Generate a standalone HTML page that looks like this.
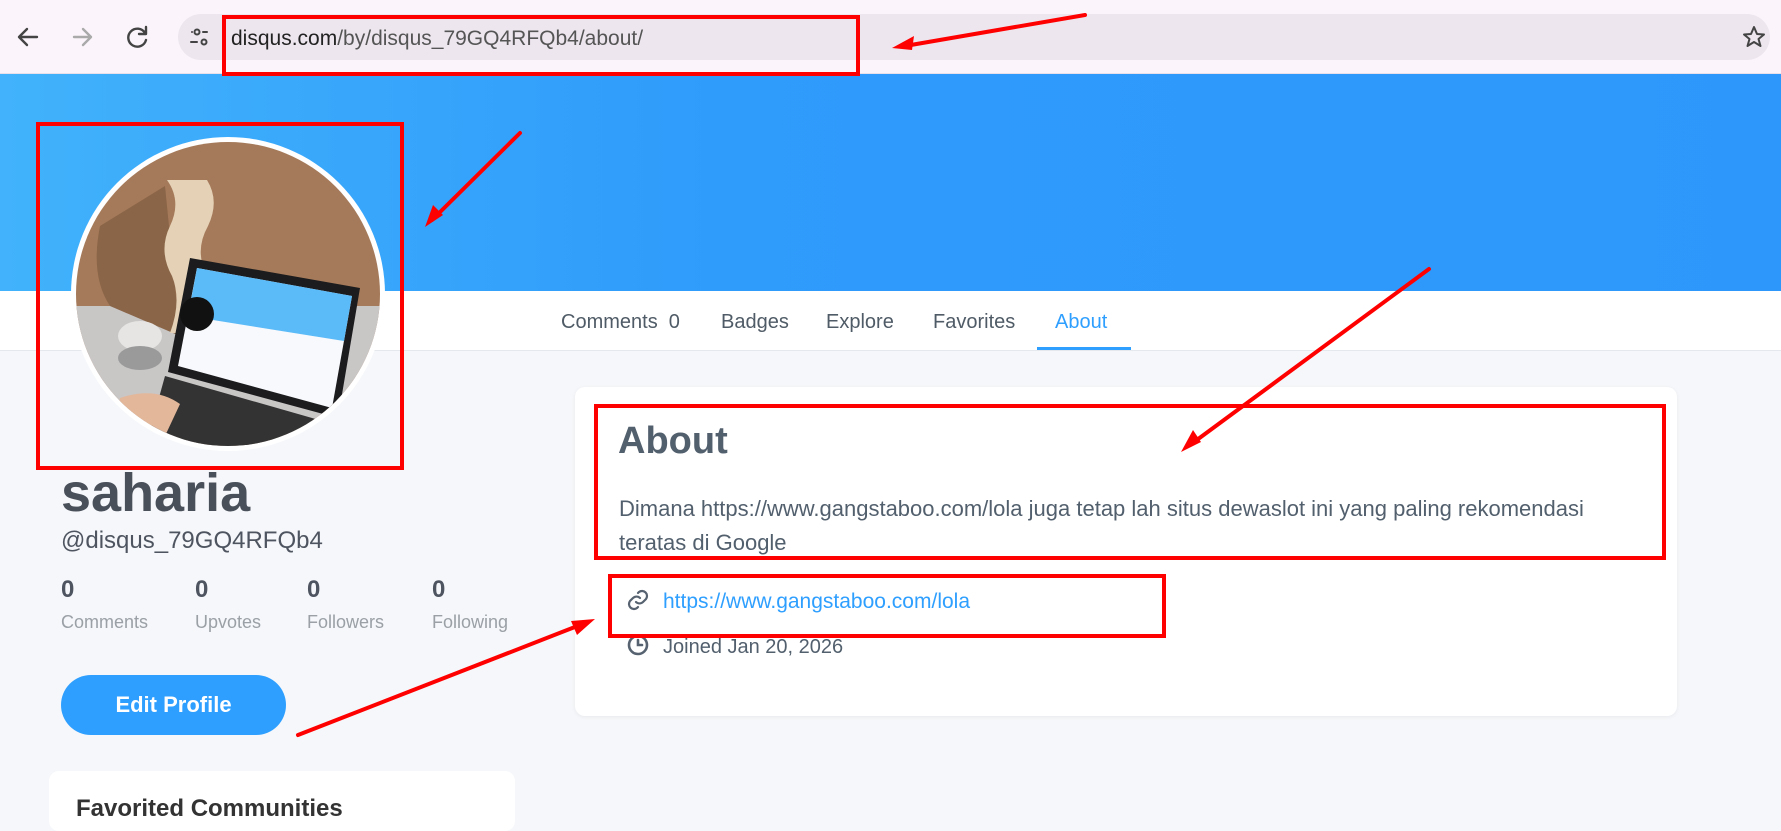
<!DOCTYPE html>
<html><head><meta charset="utf-8"><style>
*{margin:0;padding:0;box-sizing:border-box}
body{width:1781px;height:801px;overflow:hidden;background:#f5f7fa;font-family:"Liberation Sans",sans-serif;position:relative;color:#4a5568}
.abs{position:absolute}
#top{left:0;top:0;width:1781px;height:74px;background:#fbf5fb;border-bottom:1px solid #e8e0ea}
#omni{left:178px;top:14px;width:1592px;height:46px;border-radius:23px;background:#ede6ef}
#banner{left:0;top:74px;width:1781px;height:217px;background:linear-gradient(90deg,#41b2fb,#2f9bfb 40%,#2e97fb)}
#nav{left:0;top:291px;width:1781px;height:60px;background:#fff;border-bottom:1px solid #e5e9ee}
.tab{position:absolute;top:311px;font-size:20px;color:#4f5b66}
.st{font-size:24px;font-weight:bold;color:#4f5560}
.sl{font-size:18px;color:#9aa0a6}
</style></head><body>
<div id="top" class="abs"></div>
<div id="omni" class="abs"></div>
<svg class="abs" style="left:0;top:0" width="1781" height="74">
<g fill="none" stroke="#444" stroke-width="2.4" stroke-linecap="round" stroke-linejoin="round">
<path d="M37 37H20M27 29l-8 8 8 8"/>
<path d="M74 37h17M83 29l8 8-8 8" stroke="#aaa"/>
<path d="M145 33a9 9 0 1 0 1 7M146 27v7h-7"/>
<circle cx="197" cy="32" r="2.5" stroke-width="2"/><path d="M192 32h0M203 32h4M191 42h6" stroke-width="2"/><circle cx="204" cy="42" r="2.5" stroke-width="2"/>
<path d="M1754 27l3 7 7 .5-5.5 4.5 2 7-6.5-4-6.5 4 2-7-5.5-4.5 7-.5z" stroke-width="2"/>
</g>
<text x="231" y="45" font-family="Liberation Sans" font-size="21" fill="#222">disqus.com<tspan fill="#555">/by/disqus_79GQ4RFQb4/about/</tspan></text>
</svg>
<div id="banner" class="abs"></div>
<div id="nav" class="abs"></div>
<div class="tab" style="left:561px">Comments&nbsp; 0</div>
<div class="tab" style="left:721px">Badges</div>
<div class="tab" style="left:826px">Explore</div>
<div class="tab" style="left:933px">Favorites</div>
<div class="tab" style="left:1055px;color:#2e9fff">About</div>
<div class="abs" style="left:1037px;top:347px;width:94px;height:3px;background:#2e9fff"></div>

<svg class="abs" style="left:70px;top:136px" width="316" height="316" viewBox="0 0 316 316">
<defs><clipPath id="c"><circle cx="158" cy="158" r="152"/></clipPath></defs>
<circle cx="158" cy="158" r="157" fill="#fff"/>
<g clip-path="url(#c)">
<rect width="316" height="316" fill="#a57a5a"/>
<rect x="0" y="170" width="316" height="150" fill="#c9c6c6"/>
<path d="M30 90 Q20 140 40 170 L110 200 L95 50z" fill="#8a6547"/>
<path d="M97 44 Q112 65 100 90 Q88 115 102 140 Q112 165 100 197 L135 197 Q147 165 137 140 Q124 115 138 90 Q150 65 137 44z" fill="#e4d1b6"/>
<ellipse cx="70" cy="200" rx="22" ry="15" fill="#e7e5e3"/><ellipse cx="70" cy="222" rx="22" ry="12" fill="#9a9a9a"/>
<path d="M120 122 L290 152 L268 282 L98 236z" fill="#1c1c1e"/>
<path d="M127 132 L282 160 L262 272 L108 230z" fill="#f7f9fc"/>
<path d="M127 132 L282 160 L274 205 L118 180z" fill="#5bbaf8"/>
<circle cx="127" cy="178" r="17" fill="#111"/>
<path d="M95 240 L270 290 L255 330 L70 330z" fill="#333"/>
<path d="M50 262 Q85 250 110 268 L95 300 L45 300z" fill="#e3b79a"/>
</g>
</svg>

<div class="abs" style="left:61px;top:462px;font-size:54px;font-weight:bold;color:#4a505a">saharia</div>
<div class="abs" style="left:61px;top:527px;font-size:24px;color:#4f5560">@disqus_79GQ4RFQb4</div>
<div class="abs st" style="left:61px;top:576px">0</div><div class="abs sl" style="left:61px;top:612px">Comments</div>
<div class="abs st" style="left:195px;top:576px">0</div><div class="abs sl" style="left:195px;top:612px">Upvotes</div>
<div class="abs st" style="left:307px;top:576px">0</div><div class="abs sl" style="left:307px;top:612px">Followers</div>
<div class="abs st" style="left:432px;top:576px">0</div><div class="abs sl" style="left:432px;top:612px">Following</div>
<div class="abs" style="left:61px;top:675px;width:225px;height:60px;border-radius:30px;background:#2e9fff;color:#fff;font-size:22px;font-weight:bold;text-align:center;line-height:60px">Edit Profile</div>
<div class="abs" style="left:49px;top:771px;width:466px;height:60px;border-radius:10px;background:#fff"></div>
<div class="abs" style="left:76px;top:795px;font-size:24px;font-weight:bold;color:#333">Favorited Communities</div>

<div class="abs" style="left:575px;top:387px;width:1102px;height:329px;border-radius:10px;background:#fff;box-shadow:0 1px 4px rgba(0,0,0,.06)"></div>
<div class="abs" style="left:618px;top:420px;font-size:38px;font-weight:bold;color:#525f6d">About</div>
<div class="abs" style="left:619px;top:492px;font-size:22px;line-height:34px;color:#525f6d;width:1015px">Dimana https://www.gangstaboo.com/lola juga tetap lah situs dewaslot ini yang paling rekomendasi teratas di Google</div>
<svg class="abs" style="left:626px;top:588px" width="24" height="24" viewBox="0 0 24 24" fill="none" stroke="#566270" stroke-width="2.2" stroke-linecap="round"><path d="M10 14a5 5 0 0 0 7 0l3-3a5 5 0 0 0-7-7l-1 1"/><path d="M14 10a5 5 0 0 0-7 0l-3 3a5 5 0 0 0 7 7l1-1"/></svg>
<div class="abs" style="left:663px;top:590px;font-size:21px;color:#2e9fff">https://www.gangstaboo.com/lola</div>
<svg class="abs" style="left:626px;top:633px" width="24" height="24" viewBox="0 0 24 24" fill="none" stroke="#566270" stroke-width="2.6" stroke-linecap="round"><circle cx="12" cy="12" r="9"/><path d="M12 7v5h4"/></svg>
<div class="abs" style="left:663px;top:636px;font-size:20px;color:#525f6d">Joined Jan 20, 2026</div>

<svg class="abs" style="left:0;top:0" width="1781" height="801" fill="none" stroke="#f00" stroke-width="4">
<rect x="224" y="17" width="634" height="57"/>
<rect x="38" y="124" width="364" height="344"/>
<rect x="596" y="406" width="1068" height="152"/>
<rect x="610" y="576" width="554" height="60"/>
<g stroke-width="4" stroke-linecap="round"><path d="M1085 15L905 46"/><path d="M520 133L432 220"/><path d="M1429 269L1190 445"/><path d="M298 735L580 625"/></g>
<g fill="#f00" stroke="none"><path d="M892 48l22-12-2 14z"/><path d="M425 227l8-22 10 10z"/><path d="M1181 452l12-22 8 12z"/><path d="M595 619l-24 2 6 14z"/></g>
</svg>
</body></html>
